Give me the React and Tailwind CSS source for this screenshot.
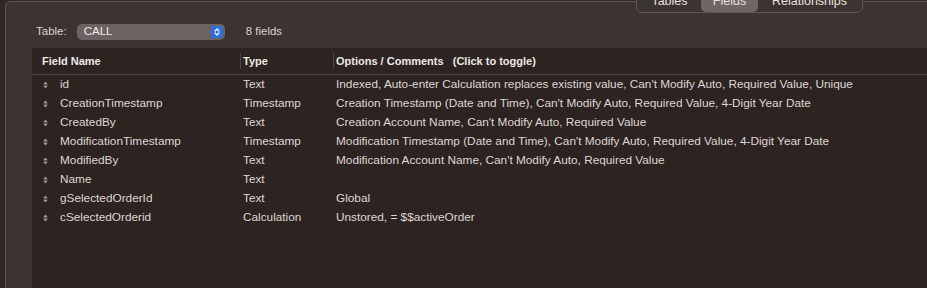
import React from "react";

const rows = [
  ["id", "Text", "Indexed, Auto-enter Calculation replaces existing value, Can't Modify Auto, Required Value, Unique"],
  ["CreationTimestamp", "Timestamp", "Creation Timestamp (Date and Time), Can't Modify Auto, Required Value, 4-Digit Year Date"],
  ["CreatedBy", "Text", "Creation Account Name, Can't Modify Auto, Required Value"],
  ["ModificationTimestamp", "Timestamp", "Modification Timestamp (Date and Time), Can't Modify Auto, Required Value, 4-Digit Year Date"],
  ["ModifiedBy", "Text", "Modification Account Name, Can't Modify Auto, Required Value"],
  ["Name", "Text", ""],
  ["gSelectedOrderId", "Text", "Global"],
  ["cSelectedOrderid", "Calculation", "Unstored, = $$activeOrder"],
];

function SortIcon() {
  return (
    <svg width="5" height="8" viewBox="0 0 5 8" className="shrink-0">
      <path d="M2.5 0.5 L4.5 3 L0.5 3 Z" fill="#a59d9b" />
      <path d="M2.5 7.5 L4.5 5 L0.5 5 Z" fill="#a59d9b" />
      <rect x="0.5" y="3.6" width="4" height="0.8" fill="#a59d9b" />
    </svg>
  );
}

export default function App() {
  return (
    <div className="relative w-[927px] h-[288px] overflow-hidden bg-[#2f2927] font-['Liberation_Sans',Arial,sans-serif] text-[#ddd7d5]">
      <div className="ml-[5px] mt-[1px] h-[287px] border-l border-t border-[#5c5452] rounded-tl-[6px] bg-[#3c3432] flex flex-col">
        <div className="flex items-center h-[16px] mt-[22px] pl-[30px]">
          <span className="text-[11.5px] text-[#d8d2d0]">Table:</span>
          <div className="ml-[10px] w-[148px] h-[16px] rounded-[5px] bg-[#6b6361] flex items-center pl-[7px] pr-[2px]">
            <span className="text-[11.5px] text-[#f0ecea] flex-1">CALL</span>
            <div className="w-[12px] h-[12px] rounded-[3px] bg-[#2c6ee2] flex items-center justify-center">
              <svg width="8" height="10" viewBox="0 0 8 10">
                <path d="M2 4 L4 2 L6 4" stroke="#fff" strokeWidth="1.2" fill="none" strokeLinecap="round" strokeLinejoin="round" />
                <path d="M2 6 L4 8 L6 6" stroke="#fff" strokeWidth="1.2" fill="none" strokeLinecap="round" strokeLinejoin="round" />
              </svg>
            </div>
          </div>
          <span className="ml-[21px] text-[11.5px] text-[#d8d2d0]">8 fields</span>
        </div>
        <div className="ml-[26px] mt-[8px] flex-1 bg-[#2d2321] flex flex-col">
          <div className="h-[27px] border-b border-[#4a4240] flex items-center text-[11px] font-bold text-[#ece8e6]">
            <div className="w-[208px] pl-[10px]">Field Name</div>
            <div className="w-[93px] h-[16px] border-l border-[#4d4543] pl-[2px] flex items-center">Type</div>
            <div className="flex-1 h-[16px] border-l border-[#4d4543] pl-[2px] flex items-center whitespace-pre">Options / Comments   (Click to toggle)</div>
          </div>
          {rows.map(([name, type, opts]) => (
            <div key={name} className="h-[19px] flex items-center text-[11.8px] leading-[19px] whitespace-nowrap">
              <div className="w-[208px] pl-[11px] flex items-center">
                <SortIcon />
                <span className="ml-[12px]">{name}</span>
              </div>
              <div className="w-[93px] pl-[3px]">{type}</div>
              <div className="flex-1 pl-[3px]">{opts}</div>
            </div>
          ))}
        </div>
      </div>
      <div className="absolute left-[636px] top-[-11px] w-[227px] h-[24px] border border-[#5e5654] rounded-[6px] bg-[#3c3432] flex items-center px-[1px] text-[12.5px] text-[#e6e1df]">
        <div className="w-[63px] h-[21px] flex items-center justify-center">Tables</div>
        <div className="w-[57px] h-[21px] rounded-[5px] bg-[#6f6664] flex items-center justify-center">Fields</div>
        <div className="flex-1 h-[21px] flex items-center justify-center">Relationships</div>
      </div>
    </div>
  );
}
